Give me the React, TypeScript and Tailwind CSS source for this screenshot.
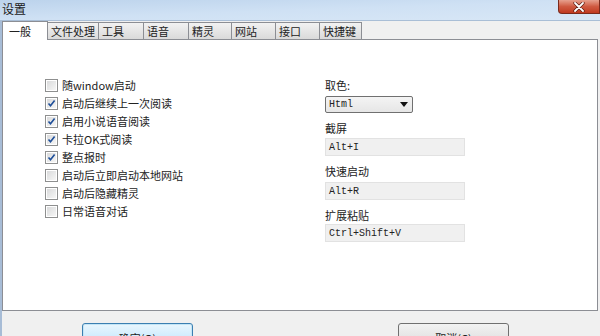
import React from "react";

const font = { fontFamily: '"Noto Sans CJK SC", "Liberation Sans", sans-serif' };
const mono = { fontFamily: '"Liberation Mono", "Noto Sans CJK SC", monospace' };

function Checkbox({ checked }: { checked: boolean }) {
  return (
    <div className="w-[13px] h-[13px] border border-[#8e8f8f] bg-white flex items-center justify-center shrink-0">
      <div className="w-[9px] h-[9px] bg-gradient-to-br from-[#d9dadb] to-[#f6f6f6] flex items-center justify-center">
        {checked && (
          <svg width="9" height="9" viewBox="0 0 9 9">
            <path d="M1.5 4.5 L3.5 6.8 L7.6 1.6" fill="none" stroke="#1f4f9a" strokeWidth="1.6" />
          </svg>
        )}
      </div>
    </div>
  );
}

const options: [string, boolean][] = [
  ["随window启动", false],
  ["启动后继续上一次阅读", true],
  ["启用小说语音阅读", true],
  ["卡拉OK式阅读", true],
  ["整点报时", true],
  ["启动后立即启动本地网站", false],
  ["启动后隐藏精灵", false],
  ["日常语音对话", false],
];

const tabs = ["文件处理", "工具", "语音", "精灵", "网站", "接口", "快捷键"];
const tabWidths = [51, 45, 45, 43, 44, 44, 42];

function Field({ value }: { value: string }) {
  return (
    <div
      className="w-[140px] h-[18px] border border-[#e2e2e2] bg-[#f0f0f0] flex items-center pl-[3px] text-[10px] text-[#222]"
      style={mono}
    >
      {value}
    </div>
  );
}

export default function App() {
  return (
    <div className="w-[600px] h-[336px] bg-[#f0f0f0] overflow-hidden flex flex-col text-[11px] text-[#222]" style={font}>
      {/* title bar */}
      <div className="h-[21px] shrink-0 bg-gradient-to-br from-[#bcd3ec] via-[#cfe1f4] to-[#d8e7f6] border-b border-[#a9bed6] flex items-start justify-between">
        <div className="pl-[2px] pt-[1px] text-[12px] text-[#1a1a1a] leading-[16px]">设置</div>
        <div className="w-[42px] h-[14px] rounded-bl-[4px] border border-t-0 border-[#7a2a1c] bg-gradient-to-b from-[#e6a08e] via-[#cf5a41] to-[#c0391f] flex items-center justify-center">
          <svg width="12" height="10" viewBox="0 0 12 10">
            <path d="M2 1 L10 9 M10 1 L2 9" stroke="#5a1a10" strokeWidth="3.2" strokeLinecap="round" />
            <path d="M2 1 L10 9 M10 1 L2 9" stroke="#ffffff" strokeWidth="1.8" strokeLinecap="round" />
          </svg>
        </div>
      </div>

      <div className="flex-1 flex flex-col border-l-2 border-[#a7bcd6]">
        {/* tabs */}
        <div className="h-[18px] shrink-0 flex items-end relative z-10">
          <div className="w-[46px] h-[19px] bg-white border border-b-0 border-[#8c8e94] pl-[6px] pt-[1px] text-[11px] leading-[16px] -mb-[1px]">
            一般
          </div>
          {tabs.map((t, i) => (
            <div
              key={t}
              style={{ width: tabWidths[i] }}
              className="h-[17px] bg-gradient-to-b from-[#f2f2f2] to-[#dadada] border border-l-0 border-b-0 border-[#8c8e94] pl-[3px] text-[11px] leading-[16px]"
            >
              {t}
            </div>
          ))}
        </div>

        {/* panel */}
        <div className="h-[272px] w-[596px] shrink-0 bg-white border border-[#8c8e94] flex pt-[36px]">
          <div className="w-[322px] pl-[42px] flex flex-col">
            {options.map(([label, checked]) => (
              <div key={label} className="h-[18px] flex items-center gap-[4px]">
                <Checkbox checked={checked} />
                <span className="leading-[18px]">{label}</span>
              </div>
            ))}
          </div>
          <div className="flex flex-col">
            <div className="h-[18px] leading-[18px]">取色:</div>
            <div
              className="mt-[2px] w-[88px] h-[17px] border border-[#707070] rounded-[2px] bg-gradient-to-b from-[#f4f4f4] to-[#e6e6e6] flex items-center justify-between pl-[3px] pr-[4px] text-[10px]"
              style={mono}
            >
              <span>Html</span>
              <svg width="8" height="5" viewBox="0 0 8 5">
                <path d="M0 0 H8 L4 5 Z" fill="#111" />
              </svg>
            </div>
            <div className="mt-[6px] h-[18px] leading-[18px]">截屏</div>
            <div className="mt-[1px]"><Field value="Alt+I" /></div>
            <div className="mt-[6px] h-[18px] leading-[18px]">快速启动</div>
            <div className="mt-[2px]"><Field value="Alt+R" /></div>
            <div className="mt-[6px] h-[18px] leading-[18px]">扩展粘贴</div>
            <div><Field value="Ctrl+Shift+V" /></div>
          </div>
        </div>

        {/* buttons */}
        <div className="flex-1 flex items-start pt-[12px] pl-[80px]">
          <div className="w-[111px] h-[23px] rounded-[3px] border border-[#3c7fb1] bg-gradient-to-b from-[#eaf6fd] to-[#bee6fd] shadow-[inset_0_0_0_1px_#c4e5f6] flex items-center justify-center pt-[8px] text-[11px]">
            确定(O)
          </div>
          <div className="ml-[205px] w-[111px] h-[23px] rounded-[3px] border border-[#707070] bg-gradient-to-b from-[#f2f2f2] to-[#dddddd] flex items-center justify-center pt-[8px] text-[11px]">
            取消(C)
          </div>
        </div>
      </div>
    </div>
  );
}
